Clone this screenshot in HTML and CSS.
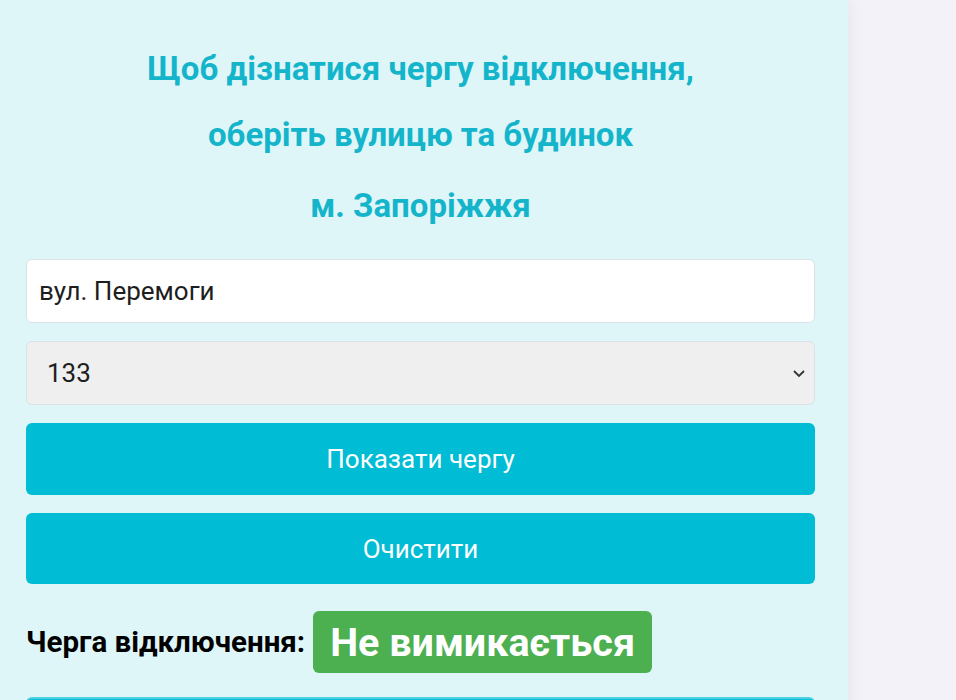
FILE: index.html
```html
<!DOCTYPE html>
<html lang="uk">
<head>
<meta charset="utf-8">
<title>Черга відключення</title>
<link rel="stylesheet" href="styles.css">
</head>
<body>
<main class="card">
  <div class="title">
    <p class="title-line">Щоб дізнатися чергу відключення,</p>
    <p class="title-line">оберіть вулицю та будинок</p>
    <p class="title-line city">м. Запоріжжя</p>
  </div>
  <div class="field input">вул. Перемоги</div>
  <div class="field select">
    <span>133</span>
    <svg class="chev" width="14" height="10" viewBox="0 0 14 10"><path d="M2 3 L7 8 L12 3" fill="none" stroke="#333" stroke-width="1.8"/></svg>
  </div>
  <button class="btn btn-show">Показати чергу</button>
  <button class="btn btn-clear">Очистити</button>
  <div class="result">
    <span class="result-label">Черга відключення:</span>
    <span class="badge">Не вимикається</span>
  </div>
  <div class="btn btn-next"></div>
</main>
</body>
</html>
```
FILE: styles.css
```css
html, body {
  margin: 0;
  padding: 0;
}
body {
  background: #f3f2f8;
  font-family: Roboto, "Noto Sans", "Liberation Sans", sans-serif;
  height: 700px;
  overflow: hidden;
}
.card {
  width: 848px;
  box-sizing: border-box;
  background: #dff6f9;
  padding: 36px 33px 0 26px;
  min-height: 800px;
  box-shadow: 0 0 18px rgba(0, 0, 0, 0.07);
  border-top-right-radius: 4px;
}
.title {
  text-align: center;
  color: #14b5cb;
  font-weight: 700;
  font-size: 33px;
  margin-bottom: 20px;
}
.title-line {
  margin: 0;
  line-height: 66px;
}
.title-line.city {
  margin-top: 5px;
}
.field {
  box-sizing: border-box;
  height: 64px;
  border: 1px solid #d9e3e5;
  border-radius: 6px;
  display: flex;
  align-items: center;
  font-size: 26px;
  color: #1e1e1e;
  margin-bottom: 18px;
}
.input {
  background: #ffffff;
  padding-left: 12px;
}
.select {
  background: #efefef;
  padding: 0 8px 0 20px;
  justify-content: space-between;
}
.btn {
  display: block;
  width: 100%;
  box-sizing: border-box;
  height: 72px;
  border: none;
  border-radius: 6px;
  background: #00bcd4;
  color: #ffffff;
  font-family: inherit;
  font-size: 26px;
  margin: 0 0 18px 0;
  padding: 0;
}
.btn-clear {
  height: 71px;
  margin-bottom: 27px;
}
.result {
  display: flex;
  align-items: center;
  gap: 8px;
}
.result-label {
  font-weight: 700;
  font-size: 29.5px;
  color: #000;
}
.badge {
  background: #4caf50;
  color: #fff;
  font-weight: 700;
  font-size: 39.5px;
  border-radius: 6px;
  height: 62px;
  display: flex;
  align-items: center;
  padding: 0 17px;
}
.btn-next {
  margin-top: 24px;
  border-top: 2px solid #4fd0e2;
}
```
